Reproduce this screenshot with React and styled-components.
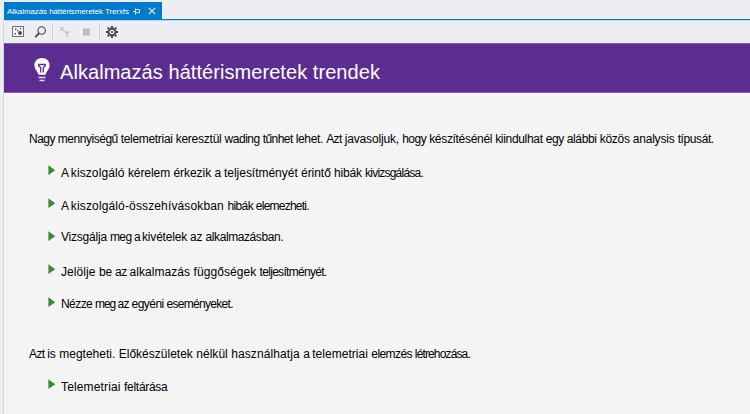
import React from "react";
import styled, { createGlobalStyle } from "styled-components";

const GlobalStyle = createGlobalStyle`
  body { margin: 0; background: #eeeef2; }
  * { box-sizing: border-box; }
`;

const Window = styled.div`
  display: flex;
  flex-direction: column;
  width: 750px;
  height: 414px;
  padding: 2px 0 0 3px;
  overflow: hidden;
  background: #eeeef2;
  font-family: "Liberation Sans", Arial, sans-serif;
  color: #000;
`;

const TabStrip = styled.div`
  display: flex;
  flex: none;
  height: 18px;
  margin-left: 1px;
  border-bottom: 1px solid #007acc;
`;

const Tab = styled.div`
  display: flex;
  align-items: center;
  width: 158px;
  height: 18px;
  padding-left: 3px;
  background: #007acc;
  color: #fff;
  svg { flex: none; }
`;

const TabTitle = styled.span`
  flex: none;
  width: 125px;
  font-size: 8px;
  letter-spacing: -0.09px;
  line-height: 17px;
  white-space: nowrap;
`;

const PinIcon = styled.svg`
  margin-left: 1px;
`;

const CloseIcon = styled.svg`
  margin-left: 7px;
`;

const Document = styled.main`
  display: flex;
  flex: 1;
  flex-direction: column;
  border-left: 1px solid #d6d6e0;
  background: #f4f4f4;
`;

const Toolbar = styled.div`
  display: flex;
  flex: none;
  align-items: center;
  height: 23px;
  padding: 0 0 1px 8px;
  border-top: 1px solid #b5d8ef;
  background: #eeeef2;
`;

const ToolButton = styled.span`
  display: flex;
  align-items: center;
  justify-content: center;
  width: ${(p) => p.$width}px;
  height: 20px;
  padding-left: ${(p) => p.$inset || 0}px;
`;

const Divider = styled.span`
  width: 1px;
  height: 17px;
  background: #cccedb;
`;

const Banner = styled.header`
  display: flex;
  flex: none;
  align-items: center;
  height: 50px;
  padding-left: 29px;
  border: 1px solid #8160ab;
  border-width: 1px 0;
  background: #5c2d91;
  color: #fff;
`;

const BulbIcon = styled.svg`
  flex: none;
  margin-top: 3px;
`;

const BannerTitle = styled.h1`
  margin: 7px 0 0 9px;
  font-size: 20px;
  font-weight: 400;
  letter-spacing: 0.06px;
  line-height: 24px;
  white-space: nowrap;
`;

const Content = styled.section`
  display: flex;
  flex-direction: column;
  padding-left: 25px;
  border-top: 1px solid #fcfcfc;
`;

const Line = styled.p`
  margin: ${(p) => p.$gap || 0}px 0 0;
  height: 14px;
  font-size: 12px;
  line-height: 14px;
  white-space: pre;
`;

const TopicList = styled.ul`
  display: flex;
  flex-direction: column;
  margin: 0;
  padding: 0 0 0 19px;
  list-style: none;
`;

const Topic = styled.li`
  display: flex;
  align-items: flex-start;
  height: 14px;
  margin-top: ${(p) => p.$gap}px;
`;

const ArrowIcon = styled.svg`
  flex: none;
  width: 8px;
  height: 10px;
  margin: ${(p) => p.$top}px 5px 0 0;
`;

const Word = styled.span`
  letter-spacing: ${(p) => p.$spacing}px;
`;

/* Each entry pairs a word with its tracking in pixels. */
const intro = [
  ["Nagy", -0.53], ["mennyiségű", -0.46], ["telemetriai", -0.31], ["keresztül", -0.24],
  ["wading", -0.48], ["tűnhet", -0.53], ["lehet.", -0.31], ["Azt", -0.54],
  ["javasoljuk,", -0.16], ["hogy", -0.47], ["készítésénél", -0.31], ["kiindulhat", -0.32],
  ["egy", -0.42], ["alábbi", -0.34], ["közös", -0.28], ["analysis", -0.19], ["típusát.", -0.41],
];

const topics = [
  { gap: 20, arrow: -1, words: [["A", -0.42], ["kiszolgáló", 0.09], ["kérelem", -0.06], ["érkezik", -0.04], ["a", -0.25], ["teljesítményét", -0.02], ["érintő", -0.05], ["hibák", -0.17], ["kivizsgálása.", -0.78]] },
  { gap: 19, arrow: -1, words: [["A", -0.42], ["kiszolgáló-összehívásokban", 0.14], ["hibák", -0.59], ["elemezheti.", -0.77]] },
  { gap: 17, arrow: 1, words: [["Vizsgálja", -0.21], ["meg", -0.67], ["a", -1], ["kivételek", -0.2], ["az", -0.17], ["alkalmazásban.", -0.42]] },
  { gap: 21, arrow: -1, words: [["Jelölje", 0.08], ["be", -0.23], ["az", -0.5], ["alkalmazás", 0.06], ["függőségek", 0.06], ["teljesítményét.", -0.7]] },
  { gap: 18, arrow: 0, words: [["Nézze", -0.56], ["meg", -1.04], ["az", -0.67], ["egyéni", -0.53], ["eseményeket.", -0.7]] },
];

const custom = [
  ["Azt", -0.62], ["is", 0], ["megteheti.", 0.01], ["Előkészületek", 0.01], ["nélkül", 0.04],
  ["használhatja", 0.1], ["a", -0.5], ["telemetriai", 0.03], ["elemzés", -0.56], ["létrehozása.", -0.86],
];

const explore = [{ gap: 19, arrow: -1, words: [["Telemetriai", 0.14], ["feltárása", -0.29]] }];

const Words = ({ items }) =>
  items.map(([text, spacing], i) => (
    <Word key={i} $spacing={spacing}>{i < items.length - 1 ? text + " " : text}</Word>
  ));

const Topics = ({ items }) => (
  <TopicList>
    {items.map((t, i) => (
      <Topic key={i} $gap={t.gap}>
        <ArrowIcon $top={t.arrow} viewBox="0 0 8 10">
          <path d="M.4 .2 7.2 5.200 .4 10Z" fill="#388a34" />
        </ArrowIcon>
        <Line><Words items={t.words} /></Line>
      </Topic>
    ))}
  </TopicList>
);

export default function App() {
  return (
    <>
      <GlobalStyle />
      <Window>
        <TabStrip>
          <Tab>
            <TabTitle>Alkalmazás háttérismeretek Trerxfs</TabTitle>
            <PinIcon width="8" height="7" viewBox="0 0 8 7" fill="none" stroke="#d4e8f7">
              <path d="M0 3.5H2.5M2.5 .5V6.5M2.5 1.5H6.5V5M2.5 4.7H6.5" />
            </PinIcon>
            <CloseIcon width="8" height="8" viewBox="0 0 8 8" fill="none" stroke="#e4f1fa" strokeWidth="1.2">
              <path d="M.8 .8 7.2 7.2M7.2 .8 .8 7.2" />
            </CloseIcon>
          </Tab>
        </TabStrip>
        <Document>
          <Toolbar>
            <ToolButton $width={12}>
              <svg width="12" height="11" viewBox="0 0 12 11">
                <rect x=".5" y=".5" width="11" height="10" fill="#f4f4f6" stroke="#707074" />
                <g fill="#424242">
                  <rect x="3" y="2.5" width="1.4" height="1.4" />
                  <rect x="8" y="2" width="1.2" height="1.2" />
                  <rect x="5" y="4" width="1.2" height="1.2" />
                  <rect x="2.5" y="7" width="1.4" height="1.4" />
                  <circle cx="8" cy="7" r="1.9" />
                </g>
              </svg>
            </ToolButton>
            <ToolButton $width={28} $inset={4}>
              <svg width="13" height="12" viewBox="0 0 13 12" fill="none" stroke="#424242">
                <circle cx="7.7" cy="4.5" r="3.7" strokeWidth="1.1" />
                <path d="M5.2 7.2 1.3 11.2" strokeWidth="1.8" />
              </svg>
            </ToolButton>
            <Divider />
            <ToolButton $width={23}>
              <svg width="12" height="12" viewBox="0 0 12 12" fill="none" stroke="#c3c3c9">
                <path d="M.8 .8 5 5M5 .8 .8 5" strokeWidth="1.1" />
                <path d="M4.5 5.2H11.5L8.8 8V10.7L7.2 11.7V8Z" fill="#c6c6cb" stroke="none" />
              </svg>
            </ToolButton>
            <ToolButton $width={21}>
              <svg width="7" height="8" viewBox="0 0 7 8">
                <rect y=".5" width="7" height="7" fill="#bdbdc2" />
              </svg>
            </ToolButton>
            <ToolButton $width={2} />
            <Divider />
            <ToolButton $width={24}>
              <svg width="12" height="12" viewBox="-6 -6 12 12" fill="none" stroke="#424242">
                <circle r="3.5" strokeWidth="1.8" />
                <path d="M0-6V-4M0 4V6M-6 0H-4M4 0H6M-4.3-4.3-3-3M3 3 4.3 4.3M-4.3 4.3-3 3M3-3 4.3-4.3" strokeWidth="1.9" />
                <circle r="1" fill="#424242" stroke="none" />
              </svg>
            </ToolButton>
          </Toolbar>
          <Banner>
            <BulbIcon width="18" height="26" viewBox="0 0 18 26">
              <path d="M9 1C4.4 1 1.4 4.2 1.4 8.2c0 3.1 1.7 4.6 2.8 6.6.7 1 .8 2 1.300 3h7c.5-1 .6-2 1.300-3 1.100-2 2.800-3.500 2.800-6.600C16.600 4.200 13.600 1 9 1Z" fill="#fff" />
              <path d="M7.7 15.5V10.5L5.7 9V7.5H12.300V9L10.300 10.500V15.500" fill="none" stroke="#5c2d91" strokeWidth="1.3" />
              <path d="M5.5 20.5H12.5M6.500 23.500H11.500" stroke="#e5dced" strokeWidth="1.4" />
            </BulbIcon>
            <BannerTitle>Alkalmazás háttérismeretek trendek</BannerTitle>
          </Banner>
          <Content>
            <Line $gap={38}><Words items={intro} /></Line>
            <Topics items={topics} />
            <Line $gap={36}><Words items={custom} /></Line>
            <Topics items={explore} />
          </Content>
        </Document>
      </Window>
    </>
  );
}
